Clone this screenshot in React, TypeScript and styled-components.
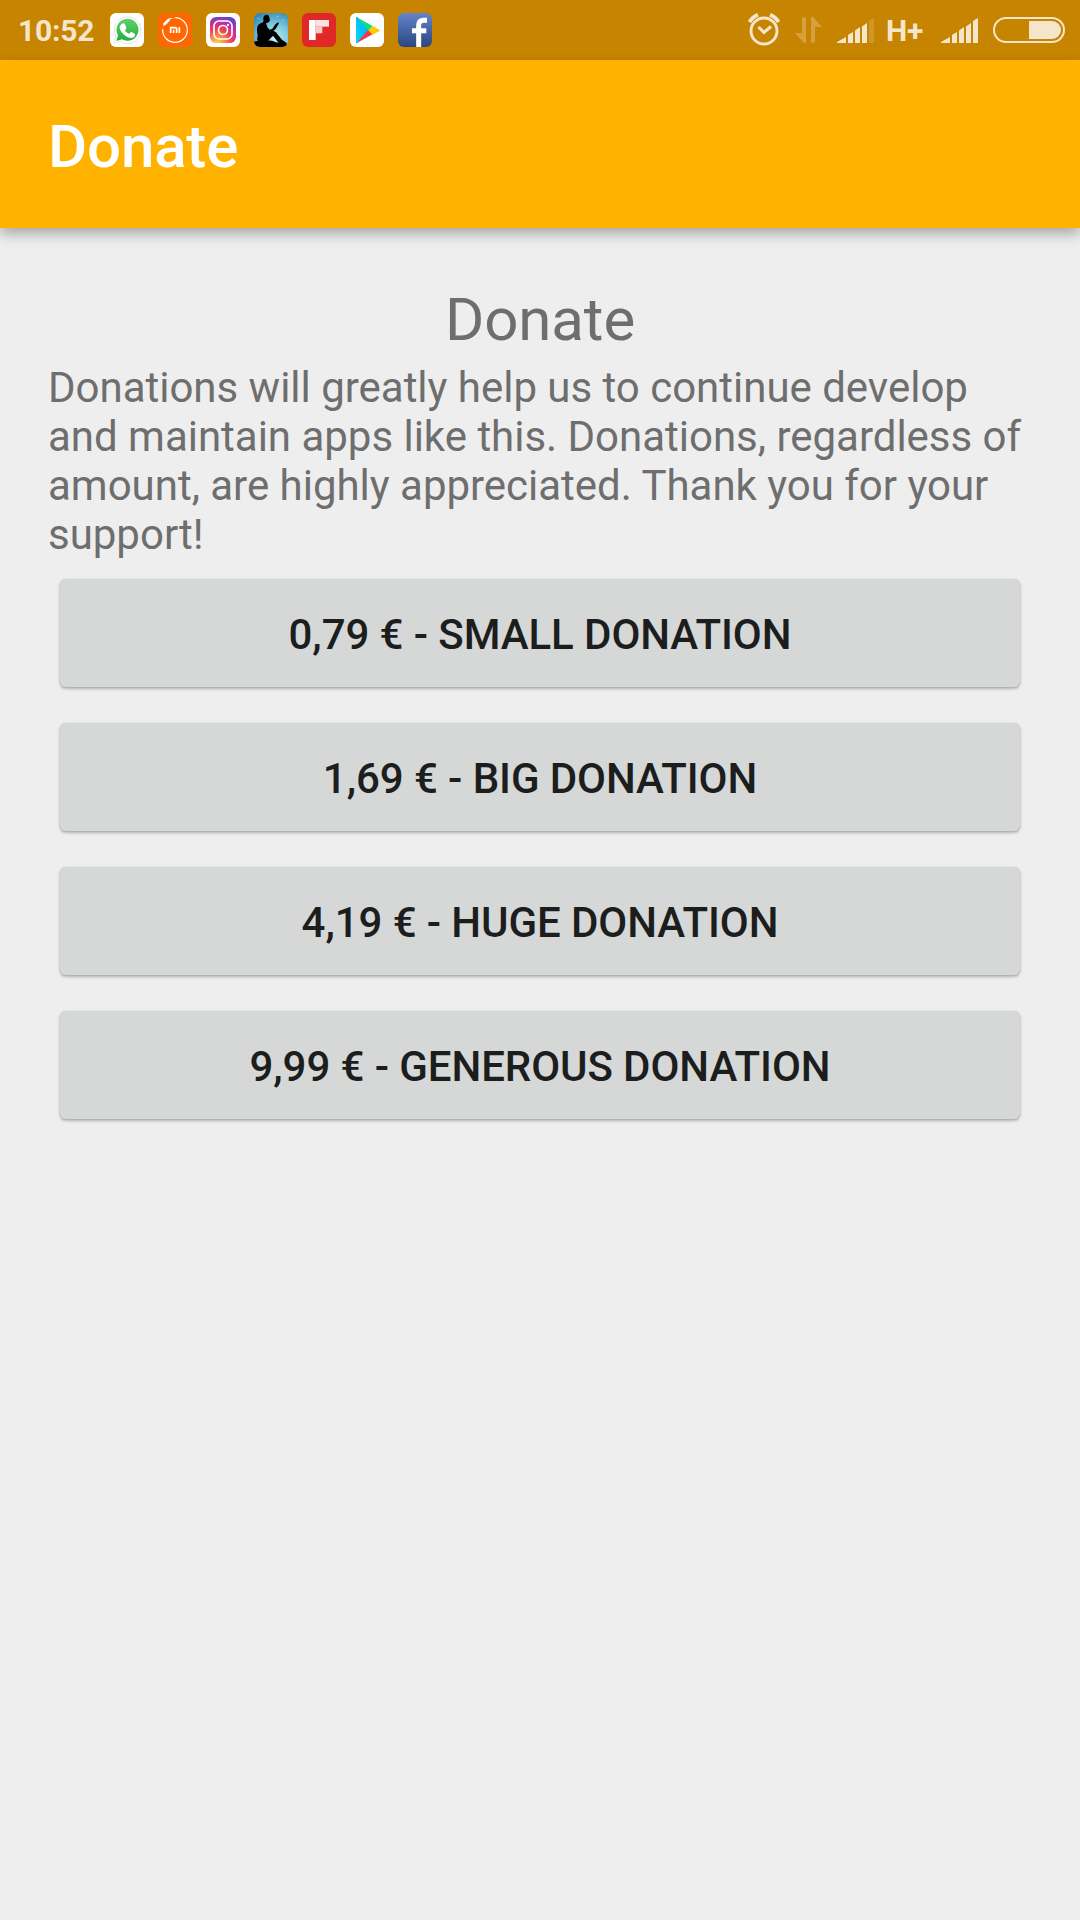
import React from "react";
import styled, { createGlobalStyle } from "styled-components";

const GlobalStyle = createGlobalStyle`
  * { box-sizing: border-box; }
  body { margin: 0; background: #eeeeee; }
`;

const ink = "#f5e6cb";

const Screen = styled.div`
  display: flex;
  flex-direction: column;
  width: 1080px;
  height: 1920px;
  overflow: hidden;
  background: #eeeeee;
  font-family: Roboto, "Liberation Sans", sans-serif;
`;

const StatusBar = styled.header`
  display: flex;
  justify-content: space-between;
  flex: none;
  height: 60px;
  padding: 0 14px 0 18px;
  background: #c68400;
`;

const StatusGroup = styled.div`
  display: flex;
  align-items: center;
`;

const StatusText = styled.span<{ $width: number }>`
  width: ${(p) => p.$width}px;
  padding-top: 2px;
  color: ${ink};
  font-size: 30px;
  line-height: 36px;
  font-weight: 700;
  letter-spacing: -0.2px;
  white-space: nowrap;
`;

const AppIcons = styled.div`
  display: flex;
  gap: 14px;
  margin-left: 14px;
`;

const AppIcon = styled.svg.attrs({ viewBox: "0 0 102 102" })`
  display: block;
  width: 34px;
  height: 34px;
  border-radius: 6px;
`;

const Glyph = styled.svg<{ $w: number; $gap?: number }>`
  display: block;
  flex: none;
  width: ${(p) => p.$w}px;
  height: 60px;
  margin-right: ${(p) => p.$gap ?? 0}px;
`;

const Toolbar = styled.div`
  display: flex;
  align-items: center;
  flex: none;
  height: 168px;
  padding: 5px 48px 0;
  background: #ffb300;
  box-shadow: 0 6px 12px rgba(0, 0, 0, 0.29);
`;

const ToolbarTitle = styled.h1`
  margin: 0;
  color: #ffffff;
  font-size: 60px;
  line-height: 70px;
  font-weight: 500;
  letter-spacing: -0.15px;
`;

const Content = styled.main`
  display: flex;
  flex-direction: column;
  padding: 56px 48px 0;
`;

const Heading = styled.h2`
  margin: 0;
  color: #6e6e6e;
  font-size: 60px;
  line-height: 71px;
  font-weight: 400;
  letter-spacing: -0.1px;
  text-align: center;
`;

const Paragraph = styled.p`
  margin: 8px 0 0;
  color: #6e6e6e;
  font-size: 42px;
  line-height: 49px;
  letter-spacing: -0.015px;
`;

const Options = styled.div`
  display: flex;
  flex-direction: column;
  gap: 36px;
  padding: 20px 12px 0;
`;

const DonateButton = styled.button`
  height: 108px;
  padding: 3px 0 0;
  border: 0;
  border-radius: 6px;
  background: #d6d7d7;
  box-shadow: 0 2px 3px rgba(0, 0, 0, 0.25), 0 0 2px rgba(0, 0, 0, 0.14);
  color: #1c1d1d;
  font-family: inherit;
  font-size: 42px;
  line-height: 49px;
  font-weight: 500;
  letter-spacing: -0.08px;
  text-transform: uppercase;
`;

const donations = [
  { price: "0,79 €", label: "Small donation" },
  { price: "1,69 €", label: "Big donation" },
  { price: "4,19 €", label: "Huge donation" },
  { price: "9,99 €", label: "Generous donation" },
];

const WhatsApp = () => (
  <AppIcon>
    <defs>
      <linearGradient id="wa" x1="0" y1="0" x2="0" y2="1">
        <stop offset="0" stopColor="#5fd06a" />
        <stop offset="1" stopColor="#25ae40" />
      </linearGradient>
    </defs>
    <rect width="102" height="102" fill="#fff" />
    <path d="M12 91 L17 70 A40 40 0 1 1 32 86 Z" fill="#fff" stroke="#e4e4e4" strokeWidth="3" />
    <path d="M19 84 L24 67 A33 33 0 1 1 36 79 Z" fill="url(#wa)" />
    <path
      d="M34 34 c3-4 9-4 11 0 l4 10 c1 3-4 6-4 8 c3 5 6 8 11 10 c3 0 5-6 9-5 l9 5 c3 2 0 9-3 11 c-7 4-17 1-25-5 c-9-7-15-14-17-23 c-1-4 2-8 5-11z"
      fill="#fff"
    />
  </AppIcon>
);

const MiStore = () => (
  <AppIcon>
    <rect width="102" height="102" fill="#ff6700" />
    <circle cx="51" cy="51" r="37" fill="none" stroke="#fff" strokeWidth="3.5" />
    <path d="M12 48 L8 28 L28 8 L52 10" fill="none" stroke="#ff6700" strokeWidth="13" />
    <path d="M18 35 L34 19" stroke="#fff" strokeWidth="8" />
    <path d="M38 60 V44 H51 Q56 44 56 49 V60 M47 50 V60 M64 42 V60" fill="none" stroke="#fff" strokeWidth="5" />
  </AppIcon>
);

const Instagram = () => (
  <AppIcon>
    <defs>
      <radialGradient id="ig" cx="0.28" cy="1.02" r="1.1">
        <stop offset="0" stopColor="#ffd35c" />
        <stop offset="0.25" stopColor="#fd9344" />
        <stop offset="0.5" stopColor="#f0404f" />
        <stop offset="0.72" stopColor="#c52fa0" />
        <stop offset="1" stopColor="#5a45d0" />
      </radialGradient>
    </defs>
    <rect width="102" height="102" fill="#fff" />
    <rect x="12" y="12" width="78" height="78" rx="19" fill="url(#ig)" />
    <g fill="none" stroke="#fff" strokeWidth="5">
      <rect x="24" y="24" width="54" height="54" rx="15" />
      <circle cx="51" cy="51" r="13.5" />
    </g>
    <circle cx="66" cy="36" r="3.5" fill="#fff" />
  </AppIcon>
);

const Kindle = () => (
  <AppIcon>
    <defs>
      <radialGradient id="kd" cx="0.6" cy="0.75" r="0.85">
        <stop offset="0" stopColor="#c4f0f8" />
        <stop offset="0.5" stopColor="#7cc6de" />
        <stop offset="1" stopColor="#2f86b4" />
      </radialGradient>
    </defs>
    <rect width="102" height="102" fill="url(#kd)" />
    <g fill="#e8fbff">
      <circle cx="71" cy="10" r="1.5" />
      <circle cx="88" cy="21" r="1.5" />
      <circle cx="12" cy="16" r="1.5" />
      <circle cx="94" cy="43" r="1.2" />
    </g>
    <path d="M0 86 Q14 80 30 82 Q54 80 66 88 Q84 90 102 96 V102 H0Z" fill="#000" />
    <path
      d="M28 21 Q26 7 37 5 Q46 5 46 15 L48 21 L45 27 Q40 29 36 31 L40 42 L47 50 L55 47 L64 34 L72 28 L75 31 L65 48 L58 53 L66 58 L84 80 L98 90 L98 96 L76 92 L57 68 L44 82 L36 88 L12 84 Q7 78 11 68 L9 53 Q8 37 17 32 L28 27Z"
      fill="#000"
    />
  </AppIcon>
);

const Flipboard = () => (
  <AppIcon>
    <rect width="102" height="102" fill="#e12828" />
    <rect x="21" y="21" width="20" height="60" fill="#fff" />
    <rect x="41" y="21" width="40" height="20" fill="#fbe3e3" />
    <rect x="41" y="41" width="20" height="20" fill="#f6c9c9" />
  </AppIcon>
);

const PlayStore = () => (
  <AppIcon>
    <defs>
      <linearGradient id="ps" x1="1" y1="0" x2="0" y2="1">
        <stop offset="0" stopColor="#00a4f8" />
        <stop offset="1" stopColor="#08dcfa" />
      </linearGradient>
    </defs>
    <rect width="102" height="102" fill="#fff" />
    <path d="M18 14 Q18 11 22 12 L57 52 L22 91 Q18 92 18 88Z" fill="url(#ps)" />
    <path d="M19 12 L68 39 L55 53Z" fill="#0be07a" />
    <path d="M19 91 L68 64 L55 50Z" fill="#f2384a" />
    <path d="M68 39 L88 50 Q91 52 88 54 L68 65 L55 52Z" fill="#ffc800" />
  </AppIcon>
);

const Facebook = () => (
  <AppIcon>
    <defs>
      <linearGradient id="fb" x1="0" y1="0" x2="0" y2="1">
        <stop offset="0" stopColor="#6384cb" />
        <stop offset="1" stopColor="#2b467f" />
      </linearGradient>
    </defs>
    <rect width="102" height="102" fill="url(#fb)" />
    <path d="M62 102 V38 Q62 22 77 22 H87 M42 53 H85" fill="none" stroke="#fff" strokeWidth="15" />
  </AppIcon>
);

const Alarm = () => (
  <Glyph $w={32} $gap={15} viewBox="0 0 32 60" fill="none" stroke={ink}>
    <circle cx="16" cy="31" r="13" strokeWidth="2.9" />
    <path d="M10.5 27 L16 32.5 L23 26.5" strokeWidth="3.1" />
    <path d="M1.5 22 Q4 17.5 10 14.8 M30.5 22 Q28 17.5 22 14.8" strokeWidth="3.8" />
  </Glyph>
);

const DataArrows = () => (
  <Glyph $w={27} $gap={15} viewBox="0 0 27 60" fill={ink} opacity={0.3}>
    <path d="M7 19 Q7 17 9 17 Q11 17 11 19 V43 H9 L0 33 H7Z" />
    <path d="M16 17 H18 L27 27 H20 V41 Q20 43 18 43 Q16 43 16 41Z" />
  </Glyph>
);

const Signal = ({ level, gap }: { level: number; gap: number }) => {
  const bars = [
    "M0 43 V42 L9 37 V43Z",
    "M11 43 V35 L16 32 V43Z",
    "M18 43 V30.5 L23 27 V43Z",
    "M25 43 V26.5 L30 23 V43Z",
    "M32 43 V21 L37 18 V43Z",
  ];
  return (
    <Glyph $w={37} $gap={gap} viewBox="0 0 37 60" fill={ink}>
      {bars.map((d, i) => (
        <path key={d} d={d} opacity={i < level ? 1 : 0.2} />
      ))}
    </Glyph>
  );
};

const Battery = () => (
  <Glyph $w={73} viewBox="0 0 73 60">
    <rect x="1" y="18" width="70" height="24" rx="12" fill="none" stroke={ink} strokeWidth="2" />
    <path d="M36 21 H59 A9 9 0 0 1 59 39 H36Z" fill={ink} />
  </Glyph>
);

export default function App() {
  return (
    <Screen>
      <GlobalStyle />
      <StatusBar>
        <StatusGroup>
          <StatusText $width={78}>10:52</StatusText>
          <AppIcons>
            <WhatsApp />
            <MiStore />
            <Instagram />
            <Kindle />
            <Flipboard />
            <PlayStore />
            <Facebook />
          </AppIcons>
        </StatusGroup>
        <StatusGroup>
          <Alarm />
          <DataArrows />
          <Signal level={4} gap={12} />
          <StatusText $width={55}>H+</StatusText>
          <Signal level={5} gap={15} />
          <Battery />
        </StatusGroup>
      </StatusBar>
      <Toolbar>
        <ToolbarTitle>Donate</ToolbarTitle>
      </Toolbar>
      <Content>
        <Heading>Donate</Heading>
        <Paragraph>
          Donations will greatly help us to continue develop and maintain apps like this. Donations, regardless of
          amount, are highly appreciated. Thank you for your support!
        </Paragraph>
        <Options>
          {donations.map((d) => (
            <DonateButton key={d.price}>
              {d.price} - {d.label}
            </DonateButton>
          ))}
        </Options>
      </Content>
    </Screen>
  );
}
